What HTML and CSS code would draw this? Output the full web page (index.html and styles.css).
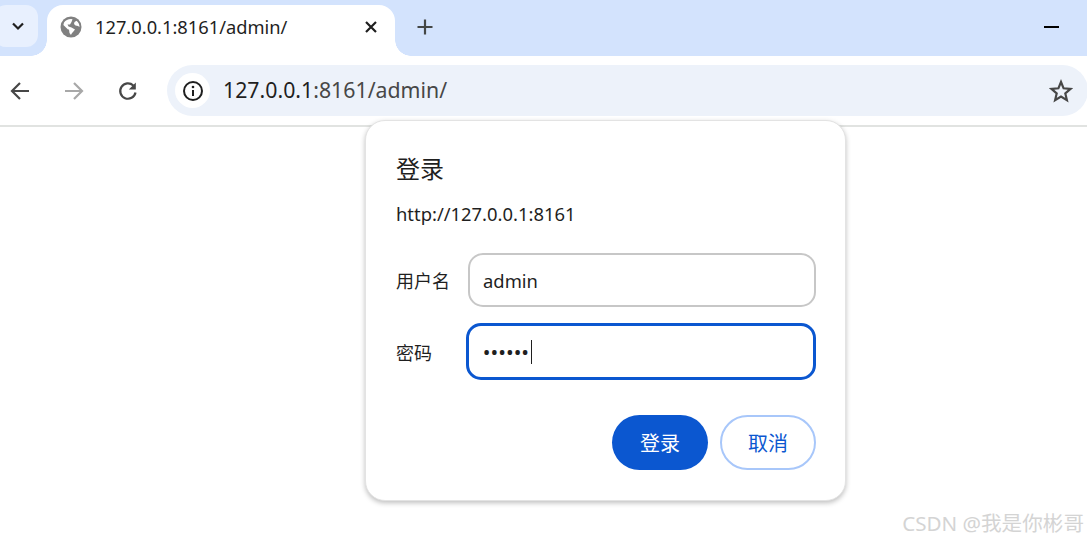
FILE: index.html
```html
<!DOCTYPE html>
<html lang="zh-CN">
<head>
    <meta charset="UTF-8">
    <meta name="viewport" content="width=device-width, initial-scale=1.0">
    <title>127.0.0.1:8161/admin/</title>
    <link rel="stylesheet" href="styles.css">
</head>
<body>
    <div class="tabstrip">
        <div class="tab-search">
            <svg width="16" height="16" viewBox="0 0 16 16"><path d="M3 5.500 8 10.500 13 5.500" fill="none" stroke="#1f1f1f" stroke-width="2.200"/></svg>
        </div>
        <div class="tab">
            <svg class="favicon" width="22" height="22" viewBox="0 0 22 22">
                <circle cx="11" cy="11" r="10.500" fill="#808080"/>
                <path d="M11 3C8 3 5.500 4.200 4 6.500L3.400 9 8 13.500 9 13.500 9.500 17 11 19C11 19 11.500 17 13 16L15 13.500 11.500 11.500 8.500 10.500 7.500 8.500 10 8.500 11.500 6 12.500 3.300ZM14.500 6 16.500 4.800C18.500 6.300 19.500 8.500 19.500 11L18 10 15.500 9.500 14 8Z" fill="#fff"/>
            </svg>
            <span class="tab-title">127.0.0.1:8161/admin/</span>
            <svg class="tab-close" width="14" height="14" viewBox="0 0 14 14"><path d="M2 2 12 12M12 2 2 12" stroke="#1f1f1f" stroke-width="2.200"/></svg>
        </div>
        <svg class="new-tab" width="18" height="18" viewBox="0 0 18 18"><path d="M9 1.500V16.500M1.500 9H16.500" stroke="#444746" stroke-width="2.200"/></svg>
        <div class="minimize"></div>
    </div>

    <div class="toolbar">
        <svg class="nav-icon" width="22" height="22" viewBox="0 0 22 22"><path d="M20 11H3M11 3 3 11 11 19" fill="none" stroke="#474747" stroke-width="2.200"/></svg>
        <svg class="nav-icon" width="22" height="22" viewBox="0 0 22 22"><path d="M2 11H19M11 3 19 11 11 19" fill="none" stroke="#a8a8a8" stroke-width="2.200"/></svg>
        <svg class="nav-icon" width="22" height="22" viewBox="0 0 22 22"><path d="M18.500 12.500A7.700 7.700 0 1 1 16.300 5.500" fill="none" stroke="#474747" stroke-width="2.200"/><path d="M18.800 2.500V9.500H11.800Z" fill="#474747"/></svg>
        <div class="omnibox">
            <div class="site-info">
                <svg width="22" height="22" viewBox="0 0 22 22"><circle cx="11" cy="11" r="9" fill="none" stroke="#1f1f1f" stroke-width="2"/><path d="M11 10V16" stroke="#1f1f1f" stroke-width="2"/><circle cx="11" cy="7" r="1.300" fill="#1f1f1f"/></svg>
            </div>
            <span class="url"><span class="host">127.0.0.1</span>:8161/admin/</span>
            <svg class="star" width="24" height="24" viewBox="0 0 24 24"><path d="M12 3 14.600 9.300 21.500 9.900 16.300 14.400 17.900 21.100 12 17.500 6.100 21.100 7.700 14.400 2.500 9.900 9.400 9.300Z" fill="none" stroke="#474747" stroke-width="2.200"/></svg>
        </div>
    </div>

    <div class="dialog">
        <h1 class="dialog-title">登录</h1>
        <p class="dialog-origin">http://127.0.0.1:8161</p>
        <div class="field">
            <span class="field-label">用户名</span>
            <div class="text-box">admin</div>
        </div>
        <div class="field field-active">
            <span class="field-label">密码</span>
            <div class="text-box text-box-focus"><span class="dots">••••••</span><span class="caret"></span></div>
        </div>
        <div class="dialog-actions">
            <div class="btn btn-primary">登录</div>
            <div class="btn btn-outline">取消</div>
        </div>
    </div>

    <div class="watermark">CSDN @我是你彬哥</div>
</body>
</html>
```

FILE: styles.css
```css
* {
    margin: 0;
    padding: 0;
    box-sizing: border-box;
}

body {
    background: #fff;
    color: #1f1f1f;
    font-family: "Noto Sans", "Noto Sans CJK SC", sans-serif;
    height: 540px;
    position: relative;
    overflow: hidden;
}

/* tab strip */
.tabstrip {
    display: flex;
    align-items: flex-start;
    height: 56px;
    padding-top: 5px;
    background: #d3e3fd;
}

.tab-search {
    display: flex;
    align-items: center;
    justify-content: center;
    width: 44px;
    height: 42px;
    margin-left: -6px;
    padding-left: 3px;
    border-radius: 12px;
    background: #e8f0fe;
}

.tab {
    display: flex;
    align-items: center;
    position: relative;
    width: 348px;
    height: 51px;
    margin-left: 9px;
    padding: 0 17px 8px 13px;
    background: #fff;
    border-radius: 16px 16px 0 0;
}

.tab::before,
.tab::after {
    content: "";
    position: absolute;
    bottom: 0;
    width: 16px;
    height: 16px;
}

.tab::before {
    left: -16px;
    background: radial-gradient(circle at 0 0, transparent 15.5px, #fff 16px);
}

.tab::after {
    right: -16px;
    background: radial-gradient(circle at 100% 0, transparent 15.5px, #fff 16px);
}

.tab-title {
    flex: 1;
    margin-left: 13px;
    font-size: 18.3px;
    color: #1f1f1f;
}

.new-tab {
    margin: 13px 0 0 21px;
}

.minimize {
    width: 15px;
    height: 2px;
    margin: 21px 28px 0 auto;
    background: #000;
}

/* address bar */
.toolbar {
    display: flex;
    align-items: center;
    height: 71px;
    padding: 9px 0 9px 9px;
    background: #fff;
    border-bottom: 2px solid #e1e3e1;
}

.nav-icon {
    flex: none;
    margin-right: 32px;
}

.nav-icon:nth-child(3) {
    margin-right: 28px;
}

.omnibox {
    display: flex;
    align-items: center;
    flex: 1;
    height: 51px;
    margin-right: -1px;
    padding: 0 15px 0 8px;
    background: #edf2fa;
    border-radius: 26px;
}

.site-info {
    display: flex;
    align-items: center;
    justify-content: center;
    width: 35px;
    height: 35px;
    background: #fff;
    border-radius: 50%;
}

.url {
    flex: 1;
    margin: 0 0 2px 13px;
    font-size: 21.3px;
    color: #474747;
}

.host {
    color: #1f1f1f;
}

/* login dialog */
.dialog {
    position: absolute;
    left: 365px;
    top: 120px;
    width: 481px;
    height: 381px;
    padding: 30px 29px 0 30px;
    background: #fff;
    border: 1px solid #e3e3e3;
    border-radius: 20px;
    box-shadow: 0 2px 5px rgba(0, 0, 0, 0.25);
}

.dialog-title {
    font-size: 24px;
    font-weight: 400;
    line-height: 36px;
}

.dialog-origin {
    margin-top: 15px;
    font-size: 18.4px;
    line-height: 24px;
}

.field {
    display: flex;
    align-items: center;
    height: 54px;
    margin-top: 27px;
}

.field-active {
    height: 57px;
    margin-top: 16px;
}

.field-label {
    width: 72px;
    font-size: 18px;
}

.field-active .field-label {
    width: 70px;
}

.text-box {
    display: flex;
    align-items: center;
    width: 348px;
    height: 54px;
    padding-left: 13px;
    font-size: 18.4px;
    border: 2px solid #c7c7c7;
    border-radius: 15px;
}

.text-box-focus {
    width: 351px;
    height: 57px;
    padding-left: 14px;
    border: 3px solid #0b57d0;
}

.dots {
    font-size: 20.5px;
}

.caret {
    width: 1px;
    height: 24px;
    margin-left: 2px;
    background: #1f1f1f;
}

.dialog-actions {
    display: flex;
    justify-content: flex-end;
    gap: 12px;
    margin-top: 35px;
}

.btn {
    display: flex;
    align-items: center;
    justify-content: center;
    width: 96px;
    height: 55px;
    font-size: 20px;
    border-radius: 28px;
}

.btn-primary {
    background: #0b57d0;
    color: #fff;
}

.btn-outline {
    color: #0b57d0;
    border: 2px solid #a8c7fa;
}

.watermark {
    position: absolute;
    right: 3px;
    bottom: 3px;
    font-size: 20.6px;
    color: #d4d4d4;
    white-space: nowrap;
}
```
